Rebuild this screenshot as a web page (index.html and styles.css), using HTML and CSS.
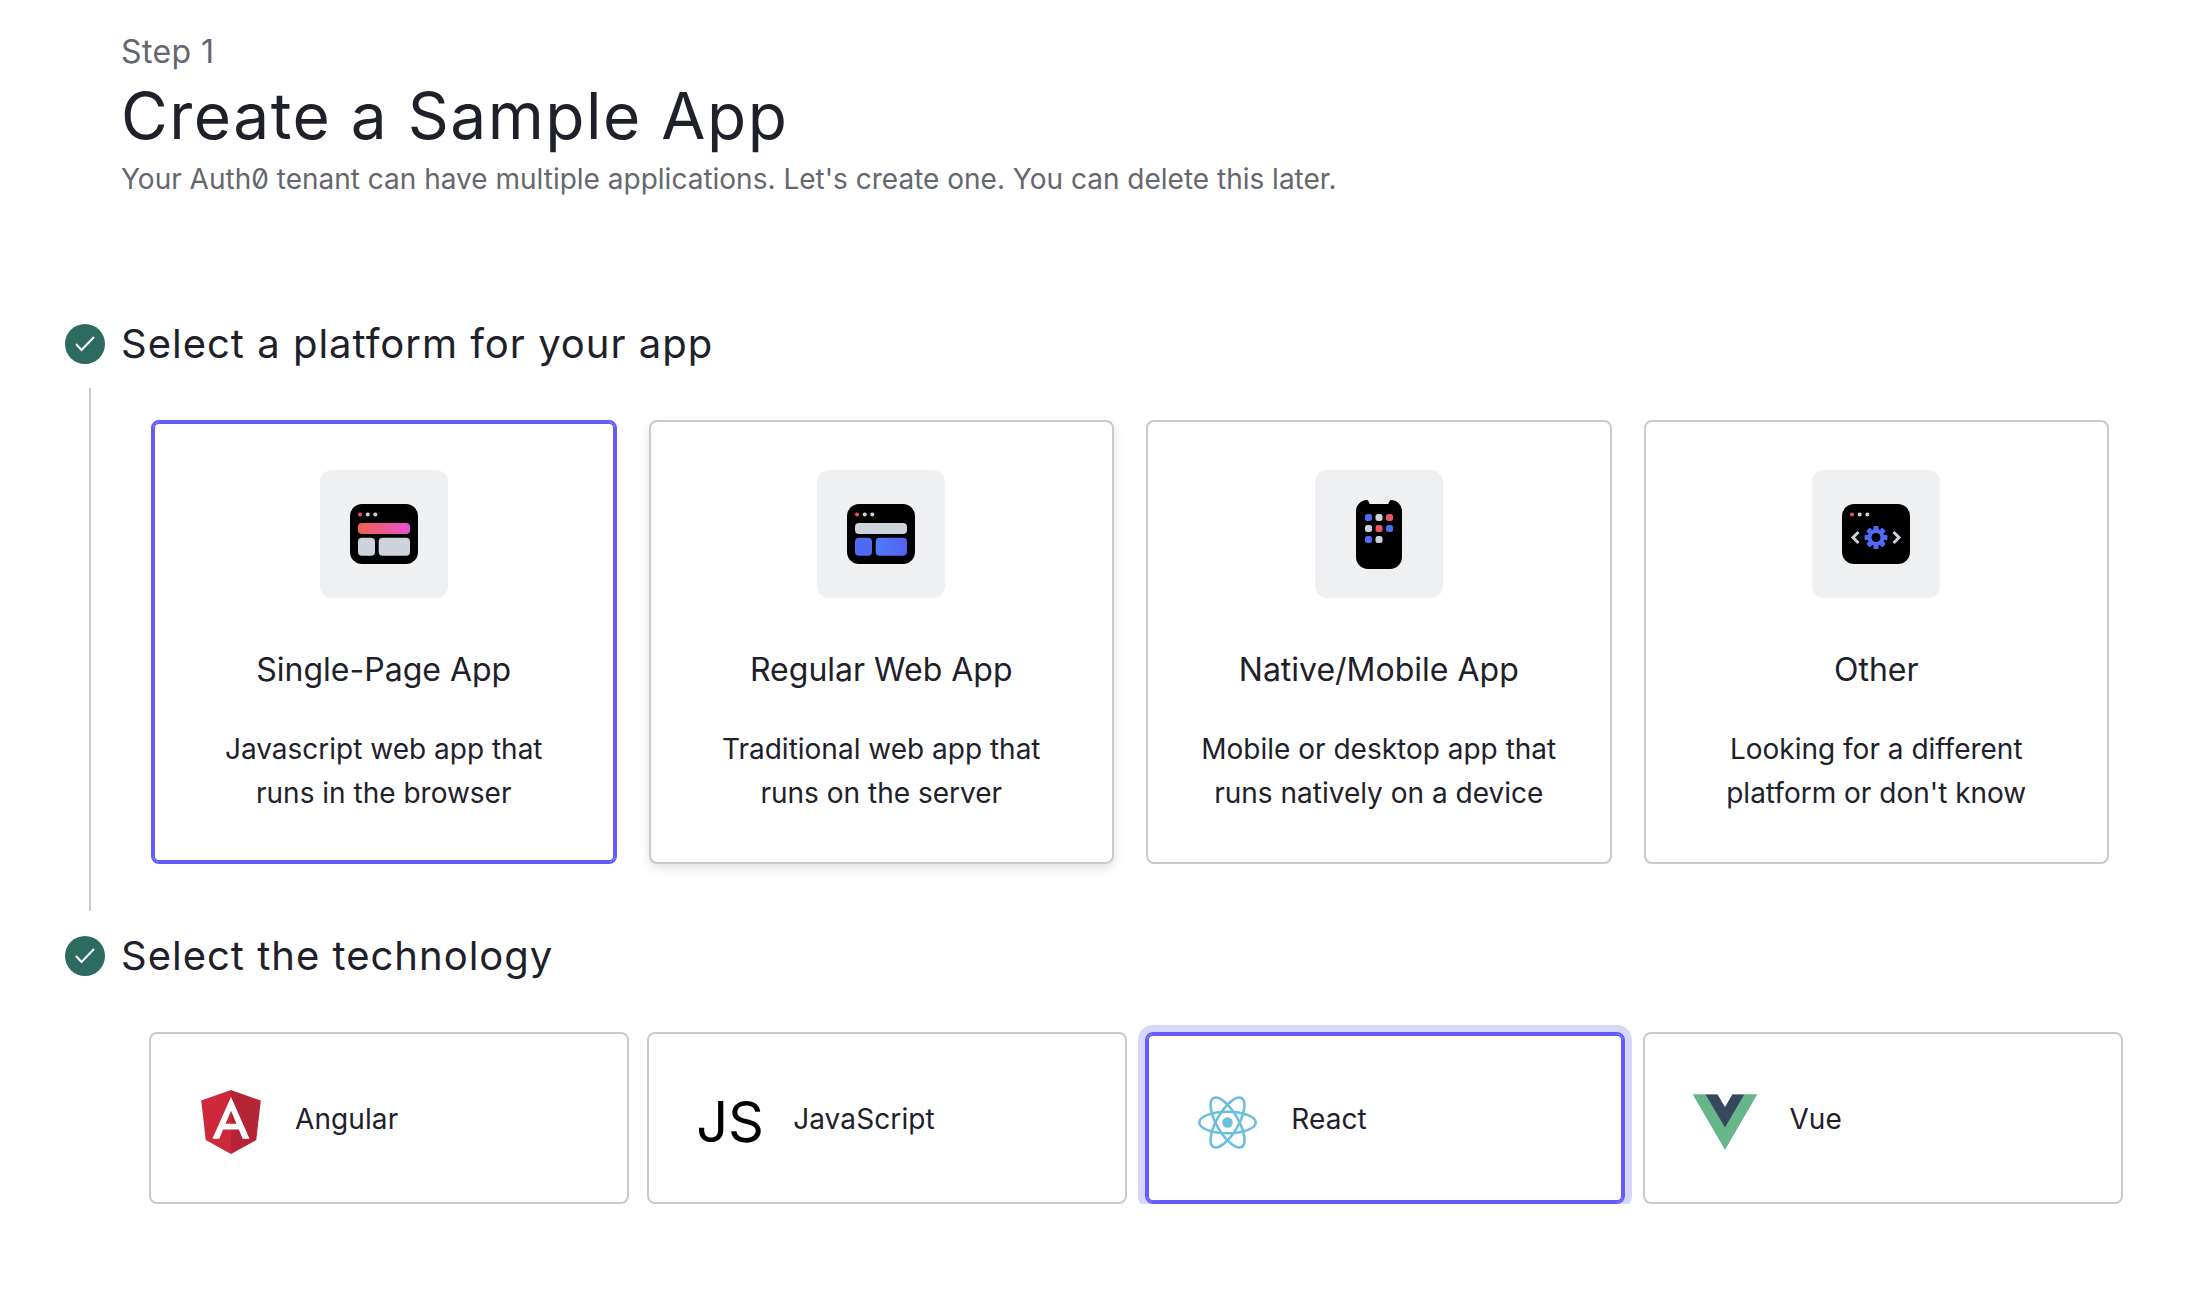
FILE: index.html
```html
<!DOCTYPE html>
<html lang="en">
<head>
    <meta charset="UTF-8">
    <meta name="viewport" content="width=device-width, initial-scale=1.0">
    <title>Create a Sample App</title>
    <link rel="stylesheet" href="styles.css">
</head>
<body>
    <div class="page">
        <div class="intro">
            <div class="step-label">Step 1</div>
            <h1>Create a Sample App</h1>
            <p>Your Auth0 tenant can have multiple applications. Let's create one. You can delete this later.</p>
        </div>

        <div class="step-head">
            <span class="check">
                <svg width="20" height="20" viewBox="0 0 20 20"><path d="M1 10l5.500 6L19 3" fill="none" stroke="#fff" stroke-width="2"/></svg>
            </span>
            <h2>Select a platform for your app</h2>
        </div>
        <div class="step-body">
            <div class="platforms">
                <div class="platform selected">
                    <div class="tile">
                        <svg width="68" height="60" viewBox="0 0 68 60">
                            <defs>
                                <linearGradient id="pink"><stop offset="0" stop-color="#f0604f"/><stop offset="1" stop-color="#e950d0"/></linearGradient>
                            </defs>
                            <rect width="68" height="60" rx="12"/>
                            <circle cx="10" cy="10.5" r="2" fill="#eb5468"/>
                            <circle cx="17.7" cy="10.5" r="2" fill="#cdd2db"/>
                            <circle cx="25.3" cy="10.5" r="2" fill="#cdd2db"/>
                            <rect x="8" y="19" width="52" height="11" rx="4" fill="url(#pink)"/>
                            <rect x="8" y="33.7" width="17" height="18" rx="4" fill="#cdd2db"/>
                            <rect x="28.7" y="33.7" width="31.3" height="18" rx="4" fill="#cdd2db"/>
                        </svg>
                    </div>
                    <h3>Single-Page App</h3>
                    <p>Javascript web app that<br>runs in the browser</p>
                </div>
                <div class="platform hovered">
                    <div class="tile">
                        <svg width="68" height="60" viewBox="0 0 68 60">
                            <defs>
                                <linearGradient id="blue"><stop offset="0" stop-color="#4f7cf7"/><stop offset="1" stop-color="#5560f0"/></linearGradient>
                            </defs>
                            <rect width="68" height="60" rx="12"/>
                            <circle cx="10" cy="10.5" r="2" fill="#eb5468"/>
                            <circle cx="17.7" cy="10.5" r="2" fill="#cdd2db"/>
                            <circle cx="25.3" cy="10.5" r="2" fill="#cdd2db"/>
                            <rect x="8" y="19" width="52" height="11" rx="4" fill="#cdd2db"/>
                            <rect x="8" y="33.7" width="17" height="18" rx="4" fill="#4f6bf5"/>
                            <rect x="28.7" y="33.7" width="31.3" height="18" rx="4" fill="url(#blue)"/>
                        </svg>
                    </div>
                    <h3>Regular Web App</h3>
                    <p>Traditional web app that<br>runs on the server</p>
                </div>
                <div class="platform">
                    <div class="tile">
                        <svg width="46" height="69" viewBox="0 0 46 69">
                            <path d="M11 0c1 0 1.500 1 2 2.500 .3 1 1 1.500 2 1.500h16c1 0 1.700-.5 2-1.500C33.500 1 34 0 35 0c6 0 11 5 11 11v46c0 6.600-5.400 12-12 12H12C5.400 69 0 63.600 0 57V11C0 5 5 0 11 0z"/>
                            <rect x="9" y="14" width="7" height="7" rx="2.500" fill="#4f6bf5"/>
                            <rect x="19.500" y="14" width="7" height="7" rx="2.500" fill="#cdd2db"/>
                            <rect x="30" y="14" width="7" height="7" rx="2.500" fill="#eb5468"/>
                            <rect x="9" y="25" width="7" height="7" rx="2.500" fill="#cdd2db"/>
                            <rect x="19.500" y="25" width="7" height="7" rx="2.500" fill="#eb5468"/>
                            <rect x="30" y="25" width="7" height="7" rx="2.500" fill="#4f6bf5"/>
                            <rect x="9" y="36" width="7" height="7" rx="2.500" fill="#4f6bf5"/>
                            <rect x="19.500" y="36" width="7" height="7" rx="2.500" fill="#cdd2db"/>
                        </svg>
                    </div>
                    <h3>Native/Mobile App</h3>
                    <p>Mobile or desktop app that<br>runs natively on a device</p>
                </div>
                <div class="platform">
                    <div class="tile">
                        <svg width="68" height="60" viewBox="0 0 68 60">
                            <rect width="68" height="60" rx="12"/>
                            <circle cx="10" cy="10.5" r="2" fill="#eb5468"/>
                            <circle cx="17.7" cy="10.5" r="2" fill="#cdd2db"/>
                            <circle cx="25.3" cy="10.500" r="2" fill="#cdd2db"/>
                            <path d="M16.500 28L11 33.500L16.500 39M51.500 28L57 33.500L51.500 39" fill="none" stroke="#cdd2db" stroke-width="3"/>
                            <g fill="#4f6bf5" transform="translate(34 33.500)">
                                <circle r="8.500"/>
                                <rect x="-2.500" y="-11.500" width="5" height="23" rx="1"/>
                                <rect x="-2.500" y="-11.500" width="5" height="23" rx="1" transform="rotate(45)"/>
                                <rect x="-2.500" y="-11.500" width="5" height="23" rx="1" transform="rotate(90)"/>
                                <rect x="-2.500" y="-11.500" width="5" height="23" rx="1" transform="rotate(135)"/>
                                <circle r="4.500" fill="#000"/>
                            </g>
                        </svg>
                    </div>
                    <h3>Other</h3>
                    <p>Looking for a different<br>platform or don't know</p>
                </div>
            </div>
        </div>

        <div class="step-head">
            <span class="check">
                <svg width="20" height="20" viewBox="0 0 20 20"><path d="M1 10l5.500 6L19 3" fill="none" stroke="#fff" stroke-width="2"/></svg>
            </span>
            <h2>Select the technology</h2>
        </div>
        <div class="techs">
            <div class="tech">
                <span class="tech-icon">
                    <svg width="60" height="64" viewBox="31.900 30 186.200 200">
                        <path d="M125 30L31.900 63.200 46.100 186.300 125 230z" fill="#cc2a3b"/>
                        <path d="M125 30v200l78.900-43.700 14.200-123.100z" fill="#b32535"/>
                        <path d="M125 52.100L66.800 182.600h21.700l11.700-29.200h49.400l11.700 29.200h21.700L125 52.100zM142 135.400h-34l17-40.900z" fill="#fff"/>
                    </svg>
                </span>
                <span>Angular</span>
            </div>
            <div class="tech">
                <span class="tech-icon js">JS</span>
                <span>JavaScript</span>
            </div>
            <div class="tech selected">
                <span class="tech-icon">
                    <svg width="59" height="53" viewBox="-11.500 -10.230 23 20.460">
                        <circle r="2.050" fill="#6bbfdd"/>
                        <g fill="none" stroke="#6bbfdd" stroke-width="1">
                            <ellipse rx="11" ry="4.200"/>
                            <ellipse rx="11" ry="4.200" transform="rotate(60)"/>
                            <ellipse rx="11" ry="4.200" transform="rotate(120)"/>
                        </g>
                    </svg>
                </span>
                <span>React</span>
            </div>
            <div class="tech">
                <span class="tech-icon">
                    <svg width="64" height="56" viewBox="0 0 256 221">
                        <path d="M204.800 0H256L128 220.800 0 0h97.920L128 51.200 157.440 0h47.360z" fill="#67b689"/>
                        <path d="M0 0l128 220.800L256 0h-51.200L128 132.480 50.560 0H0z" fill="#67b689"/>
                        <path d="M50.560 0L128 132.800 204.800 0h-47.360L128 51.200 97.920 0H50.560z" fill="#37485e"/>
                    </svg>
                </span>
                <span>Vue</span>
            </div>
        </div>
    </div>
</body>
</html>
```

FILE: styles.css
```css
body {
    font-family: Inter, "Liberation Sans", sans-serif;
    font-feature-settings: "zero";
    background-color: #fff;
    color: #1e212a;
    margin: 0;
}
h1, h2, h3, p {
    margin: 0;
    font-weight: 400;
}
.page {
    padding: 32px 85px 0 65px;
}
.intro {
    padding-left: 56px;
    height: 292px;
}
.step-label {
    font-size: 32px;
    line-height: 40px;
    color: #65676e;
    letter-spacing: 0.4px;
}
.intro h1 {
    font-size: 64px;
    line-height: 80px;
    margin-top: 4px;
    letter-spacing: 1.5px;
}
.intro p {
    font-size: 28px;
    line-height: 40px;
    margin-top: 3px;
    color: #65676e;
}
.step-head {
    display: flex;
    align-items: center;
    gap: 16px;
    height: 40px;
}
.step-head h2 {
    font-size: 40px;
    line-height: 40px;
    letter-spacing: 1px;
}
.check {
    width: 40px;
    height: 40px;
    border-radius: 50%;
    background-color: #2d6a5f;
    display: flex;
    align-items: center;
    justify-content: center;
}
.step-body {
    margin: 24px 0 25px 24px;
    padding: 32px 14px 47px 60px;
    border-left: 2px solid #c9cace;
}
.platforms {
    display: grid;
    grid-template-columns: repeat(4, 1fr);
    gap: 32px;
}
.platform {
    height: 444px;
    border: 2px solid #c9cace;
    border-radius: 8px;
    text-align: center;
    box-sizing: border-box;
    padding-top: 48px;
}
.platform.selected {
    border-color: #635dff;
    box-shadow: inset 0 0 0 2px #635dff;
}
.platform.hovered {
    box-shadow: 0 4px 12px rgba(0, 0, 0, 0.12);
}
.tile {
    width: 128px;
    height: 128px;
    margin: 0 auto;
    border-radius: 12px;
    background-color: #eff0f2;
    display: flex;
    align-items: center;
    justify-content: center;
}
.platform h3 {
    font-size: 32px;
    line-height: 44px;
    margin-top: 50px;
}
.platform p {
    font-size: 28px;
    line-height: 44px;
    margin-top: 35px;
}
.techs {
    display: grid;
    grid-template-columns: repeat(4, 1fr);
    gap: 18.5px;
    margin: 56px 0 0 84px;
}
.tech {
    height: 172px;
    box-sizing: border-box;
    border: 2px solid #c9cace;
    border-radius: 8px;
    padding: 2px 0 0 48px;
    display: flex;
    align-items: center;
    gap: 32px;
    font-size: 28px;
    letter-spacing: 0.1px;
}
.tech.selected {
    border-color: #635dff;
    box-shadow: inset 0 0 0 2px #635dff, 0 0 0 7px #d7d6fb;
}
.tech-icon {
    width: 64px;
    margin-top: 6px;
    display: flex;
    justify-content: center;
}
.tech-icon.js {
    font-size: 56px;
    color: #000;
    line-height: 64px;
    letter-spacing: 0;
    justify-content: flex-start;
    text-indent: -1px;
}
```
